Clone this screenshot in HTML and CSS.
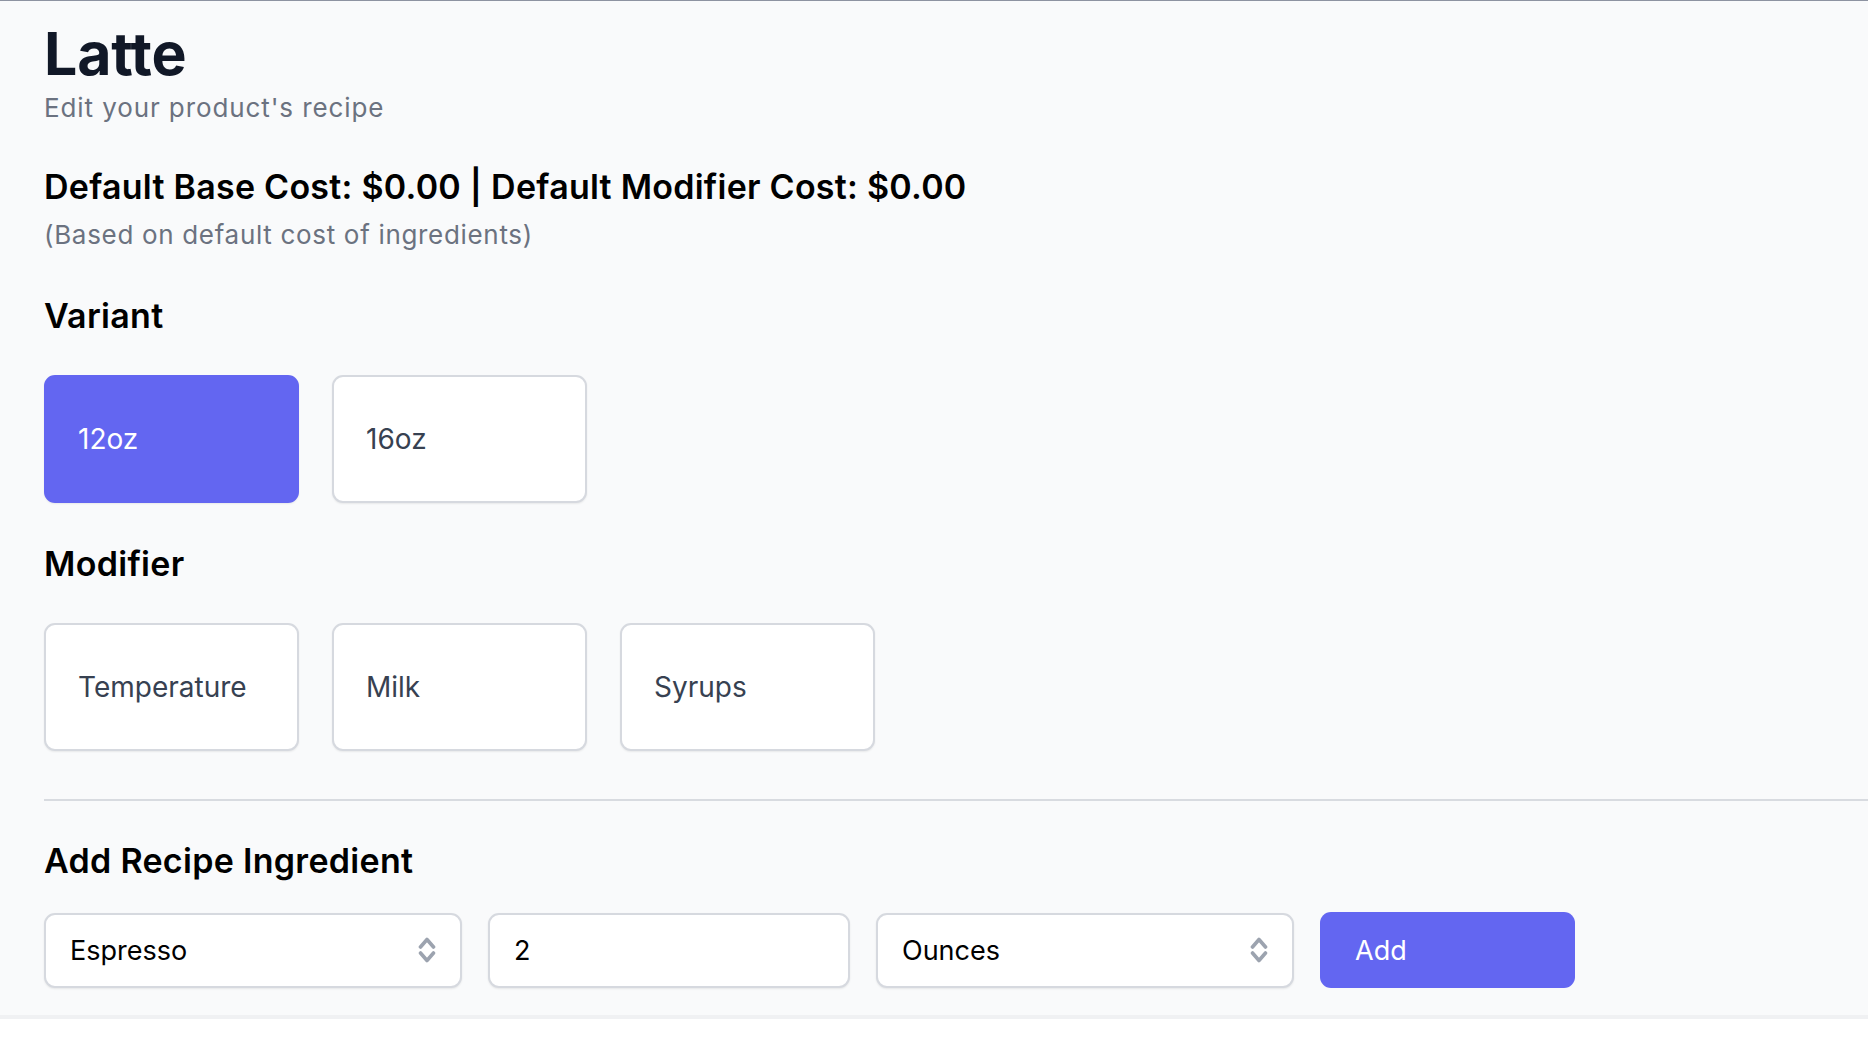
FILE: index.html
```html
<!DOCTYPE html>
<html lang="en">
<head>
<meta charset="utf-8">
<title>Latte – Edit recipe</title>
<link rel="stylesheet" href="styles.css">
</head>
<body>
<main class="page">
  <h1 class="title">Latte</h1>
  <p class="subtitle">Edit your product's recipe</p>

  <h2 class="cost">Default Base Cost: $0.00 | Default Modifier Cost: $0.00</h2>
  <p class="based">(Based on default cost of ingredients)</p>

  <h2 class="section-heading">Variant</h2>
  <div class="options">
    <button class="option option-active" type="button">12oz</button>
    <button class="option" type="button">16oz</button>
  </div>

  <h2 class="section-heading section-heading-modifier">Modifier</h2>
  <div class="options">
    <button class="option" type="button">Temperature</button>
    <button class="option" type="button">Milk</button>
    <button class="option" type="button">Syrups</button>
  </div>

  <hr class="divider">

  <h2 class="section-heading section-heading-add">Add Recipe Ingredient</h2>
  <div class="ingredient-row">
    <div class="field field-select">
      <span class="field-value">Espresso</span>
      <svg class="chevrons" width="18" height="28" viewBox="0 0 18 28" aria-hidden="true">
        <polyline points="2.5,11 9,3.5 15.5,11" />
        <polyline points="2.5,17 9,24.5 15.5,17" />
      </svg>
    </div>
    <div class="field field-number">
      <span class="field-value">2</span>
    </div>
    <div class="field field-select">
      <span class="field-value">Ounces</span>
      <svg class="chevrons" width="18" height="28" viewBox="0 0 18 28" aria-hidden="true">
        <polyline points="2.5,11 9,3.5 15.5,11" />
        <polyline points="2.5,17 9,24.5 15.5,17" />
      </svg>
    </div>
    <button class="add-button" type="button">Add</button>
  </div>
</main>
</body>
</html>
```

FILE: styles.css
```css
* {
  box-sizing: border-box;
}

html, body {
  margin: 0;
  padding: 0;
  background: #ffffff;
}

body {
  font-family: Inter, "Noto Sans", "Liberation Sans", sans-serif;
  color: #000000;
}

.page {
  background: #f9fafb;
  border-top: 1px solid #8d93a1;
  border-bottom: 4px solid #f0f1f3;
  padding: 16px 0 27px 44px;
}

.title {
  margin: 0;
  font-size: 59px;
  line-height: 73px;
  font-weight: 700;
  color: #111827;
  letter-spacing: -0.2px;
}

.subtitle {
  margin: 0;
  font-size: 26px;
  line-height: 36px;
  color: #6b7280;
  letter-spacing: 0.9px;
}

.cost {
  margin: 37px 0 0;
  font-size: 34px;
  line-height: 48px;
  font-weight: 600;
  color: #000000;
  letter-spacing: 0.25px;
}

.based {
  margin: 6px 0 0;
  font-size: 26px;
  line-height: 36px;
  color: #6b7280;
  letter-spacing: 0.68px;
}

.section-heading {
  margin: 39px 0 0;
  font-size: 34px;
  line-height: 48px;
  font-weight: 600;
  color: #000000;
  letter-spacing: 0.3px;
}

.section-heading-modifier {
  margin-top: 37px;
}

.section-heading + .options {
  margin-top: 35px;
}

.options {
  display: flex;
  gap: 33px;
}

.option {
  width: 255px;
  height: 128px;
  padding: 0 0 0 32px;
  text-align: left;
  font-family: inherit;
  font-size: 28px;
  color: #374151;
  background: #ffffff;
  border: 2px solid #d6d9df;
  border-radius: 11px;
  box-shadow: 0 1px 2px rgba(0, 0, 0, 0.07);
  cursor: pointer;
}

.option-active {
  background: #6366f1;
  border-color: #6366f1;
  color: #ffffff;
}

.divider {
  margin: 48px 0 0;
  border: 0;
  height: 2px;
  background: #d8dbe0;
}

.section-heading-add {
  margin-top: 36px;
}

.ingredient-row {
  margin-top: 27px;
  display: flex;
  gap: 26px;
  align-items: center;
}

.field {
  height: 75px;
  display: flex;
  align-items: center;
  justify-content: space-between;
  padding: 0 24px 0 24px;
  background: #ffffff;
  border: 2px solid #d6d9df;
  border-radius: 11px;
  box-shadow: 0 1px 2px rgba(0, 0, 0, 0.08);
  font-size: 27px;
  color: #000000;
}

.field-select {
  width: 418px;
}

.field-number {
  width: 362px;
}

.chevrons {
  fill: none;
  stroke: #9ca3af;
  stroke-width: 3.6;
  stroke-linecap: round;
  stroke-linejoin: round;
}

.add-button {
  width: 255px;
  height: 76px;
  padding: 0 0 0 35px;
  text-align: left;
  font-family: inherit;
  font-size: 27px;
  color: #ffffff;
  background: #6366f1;
  border: 0;
  border-radius: 11px;
  cursor: pointer;
}
```
